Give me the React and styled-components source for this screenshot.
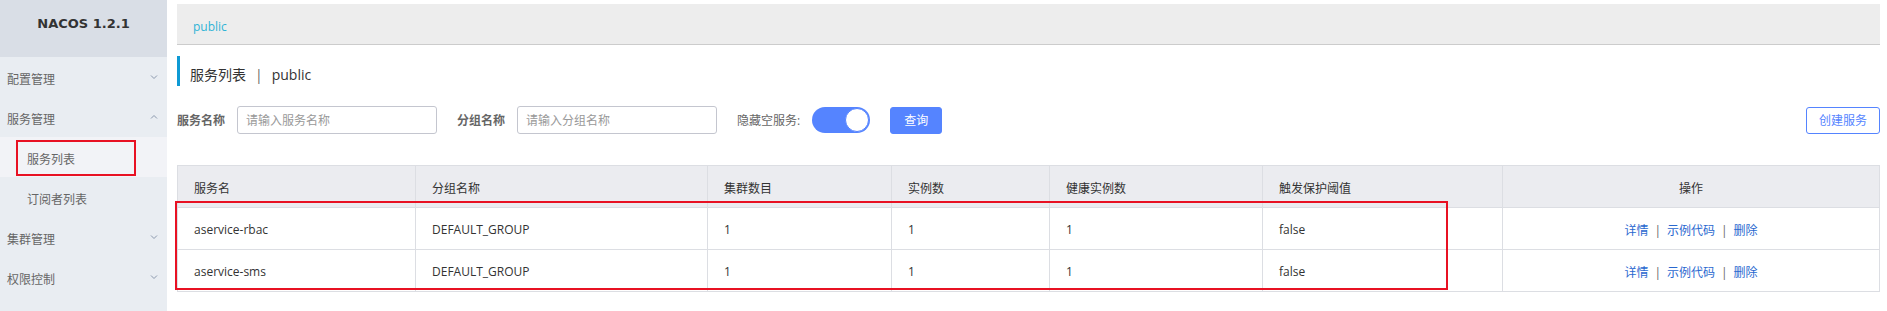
import React from 'react';
import styled, { createGlobalStyle } from 'styled-components';

const GlobalStyle = createGlobalStyle`
  html, body {
    margin: 0;
    padding: 0;
    background: #fff;
  }
  body {
    font-family: "Open Sans", "Noto Sans CJK SC", sans-serif;
    font-size: 12px;
    color: #333;
  }
`;

const Page = styled.div`
  display: flex;
  width: 1887px;
  height: 311px;
  overflow: hidden;
`;

const Sidebar = styled.aside`
  width: 167px;
  flex: none;
  background: #e9edf2;
`;

const Logo = styled.div`
  height: 57px;
  background: #d9dee6;
  color: #333;
  font-family: "DejaVu Sans", "Noto Sans CJK SC", sans-serif;
  font-weight: bold;
  font-size: 13px;
  text-align: center;
  line-height: 47px;
`;

const MenuItem = styled.div`
  position: relative;
  height: 40px;
  line-height: 45px;
  padding-left: ${p => (p.$sub ? '27px' : '7px')};
  color: #666;
  font-size: 12px;
  background: ${p => (p.$active ? '#f2f3f7' : 'transparent')};
`;

const Chevron = styled.svg`
  position: absolute;
  right: 9px;
  top: 16px;
  width: 8px;
  height: 8px;
`;

const Mark = styled.span`
  position: absolute;
  left: 16px;
  top: 3px;
  width: 116px;
  height: 32px;
  border: 2px solid #e81123;
  pointer-events: none;
`;

const Main = styled.main`
  flex: 1;
  padding: 4px 7px 0 10px;
  min-width: 0;
`;

const Crumb = styled.div`
  height: 40px;
  background: #ededed;
  border-bottom: 1px solid #cccccc;
  padding-left: 16px;
  line-height: 46px;
  color: #2fb4d6;
  font-size: 12px;
`;

const Title = styled.div`
  margin-top: 11px;
  height: 30px;
  border-left: 3px solid #0e9ad4;
  padding-left: 10px;
  line-height: 38px;
  font-size: 14px;
  color: #333;
`;

const Pipe = styled.span`
  color: #666;
  margin: 0 9px;
`;

const SearchRow = styled.div`
  margin-top: 20px;
  display: flex;
  align-items: center;
  height: 28px;
`;

const Label = styled.label`
  font-size: 12px;
  font-weight: ${p => (p.$bold ? 'bold' : 'normal')};
  color: #666;
  margin-right: 12px;
`;

const Input = styled.input`
  box-sizing: border-box;
  width: 200px;
  height: 28px;
  border: 1px solid #c4c6cf;
  border-radius: 3px;
  padding: 0 8px;
  margin-right: 20px;
  font-family: inherit;
  font-size: 12px;
  outline: none;
  &::placeholder {
    color: #999;
  }
`;

const Toggle = styled.span`
  position: relative;
  display: inline-block;
  width: 58px;
  height: 26px;
  border-radius: 13px;
  background: #5584ff;
  margin-right: 20px;
  &::after {
    content: '';
    position: absolute;
    right: 1px;
    top: 1px;
    width: 22px;
    height: 22px;
    border-radius: 50%;
    background: #fff;
    border: 1px solid #5584ff;
  }
`;

const Button = styled.button`
  box-sizing: border-box;
  height: 27px;
  padding: 0 ${p => (p.$ghost ? '12px' : '13px')};
  border-radius: 3px;
  border: 1px solid #5584ff;
  background: ${p => (p.$ghost ? '#fff' : '#5584ff')};
  color: ${p => (p.$ghost ? '#5584ff' : '#fff')};
  font-family: inherit;
  font-size: 12px;
  cursor: pointer;
`;

const Spacer = styled.div`
  flex: 1;
`;

const TableWrap = styled.div`
  position: relative;
  margin-top: 31px;
`;

const Table = styled.table`
  width: 100%;
  border-collapse: collapse;
  table-layout: fixed;
  font-size: 12px;
  color: #333;
`;

const Th = styled.th`
  height: 39px;
  background: #ebecf0;
  border: 1px solid #dcdee3;
  font-weight: normal;
  text-align: ${p => (p.$center ? 'center' : 'left')};
  padding: 2px 16px 0;
`;

const Td = styled.td`
  height: 39px;
  border: 1px solid #dcdee3;
  text-align: ${p => (p.$center ? 'center' : 'left')};
  padding: 2px 16px 0;
`;

const Link = styled.a`
  color: #2a68cf;
  text-decoration: none;
`;

const Sep = styled.span`
  color: #666;
  margin: 0 6px;
`;

const RowMark = styled.span`
  position: absolute;
  left: -2px;
  top: 36px;
  width: 1269px;
  height: 85px;
  border: 2px solid #e81123;
  pointer-events: none;
`;

const Down = () => (
  <Chevron viewBox="0 0 8 8">
    <path d="M1 2.5 L4 5.5 L7 2.5" fill="none" stroke="#8a98ad" strokeWidth="1" />
  </Chevron>
);

const Up = () => (
  <Chevron viewBox="0 0 8 8">
    <path d="M1 5.5 L4 2.5 L7 5.5" fill="none" stroke="#8a98ad" strokeWidth="1" />
  </Chevron>
);

const rows = [
  { name: 'aservice-rbac', group: 'DEFAULT_GROUP', clusters: 1, ips: 1, healthy: 1, threshold: 'false' },
  { name: 'aservice-sms', group: 'DEFAULT_GROUP', clusters: 1, ips: 1, healthy: 1, threshold: 'false' },
];

const App = () => {
  return (
    <Page>
      <GlobalStyle />
      <Sidebar>
        <Logo>NACOS 1.2.1</Logo>
        <MenuItem>配置管理<Down /></MenuItem>
        <MenuItem>服务管理<Up /></MenuItem>
        <MenuItem $sub $active>服务列表<Mark /></MenuItem>
        <MenuItem $sub>订阅者列表</MenuItem>
        <MenuItem>集群管理<Down /></MenuItem>
        <MenuItem>权限控制<Down /></MenuItem>
      </Sidebar>
      <Main>
        <Crumb>public</Crumb>
        <Title>服务列表<Pipe>|</Pipe>public</Title>
        <SearchRow>
          <Label $bold>服务名称</Label>
          <Input placeholder="请输入服务名称" />
          <Label $bold>分组名称</Label>
          <Input placeholder="请输入分组名称" />
          <Label>隐藏空服务:</Label>
          <Toggle />
          <Button>查询</Button>
          <Spacer />
          <Button $ghost>创建服务</Button>
        </SearchRow>
        <TableWrap>
          <Table>
            <colgroup>
              <col style={{ width: 238 }} />
              <col style={{ width: 292 }} />
              <col style={{ width: 184 }} />
              <col style={{ width: 158 }} />
              <col style={{ width: 213 }} />
              <col style={{ width: 240 }} />
              <col />
            </colgroup>
            <thead>
              <tr>
                <Th>服务名</Th>
                <Th>分组名称</Th>
                <Th>集群数目</Th>
                <Th>实例数</Th>
                <Th>健康实例数</Th>
                <Th>触发保护阈值</Th>
                <Th $center>操作</Th>
              </tr>
            </thead>
            <tbody>
              {rows.map(r => (
                <tr key={r.name}>
                  <Td>{r.name}</Td>
                  <Td>{r.group}</Td>
                  <Td>{r.clusters}</Td>
                  <Td>{r.ips}</Td>
                  <Td>{r.healthy}</Td>
                  <Td>{r.threshold}</Td>
                  <Td $center>
                    <Link>详情</Link><Sep>|</Sep><Link>示例代码</Link><Sep>|</Sep><Link>删除</Link>
                  </Td>
                </tr>
              ))}
            </tbody>
          </Table>
          <RowMark />
        </TableWrap>
      </Main>
    </Page>
  );
};

export default App;
